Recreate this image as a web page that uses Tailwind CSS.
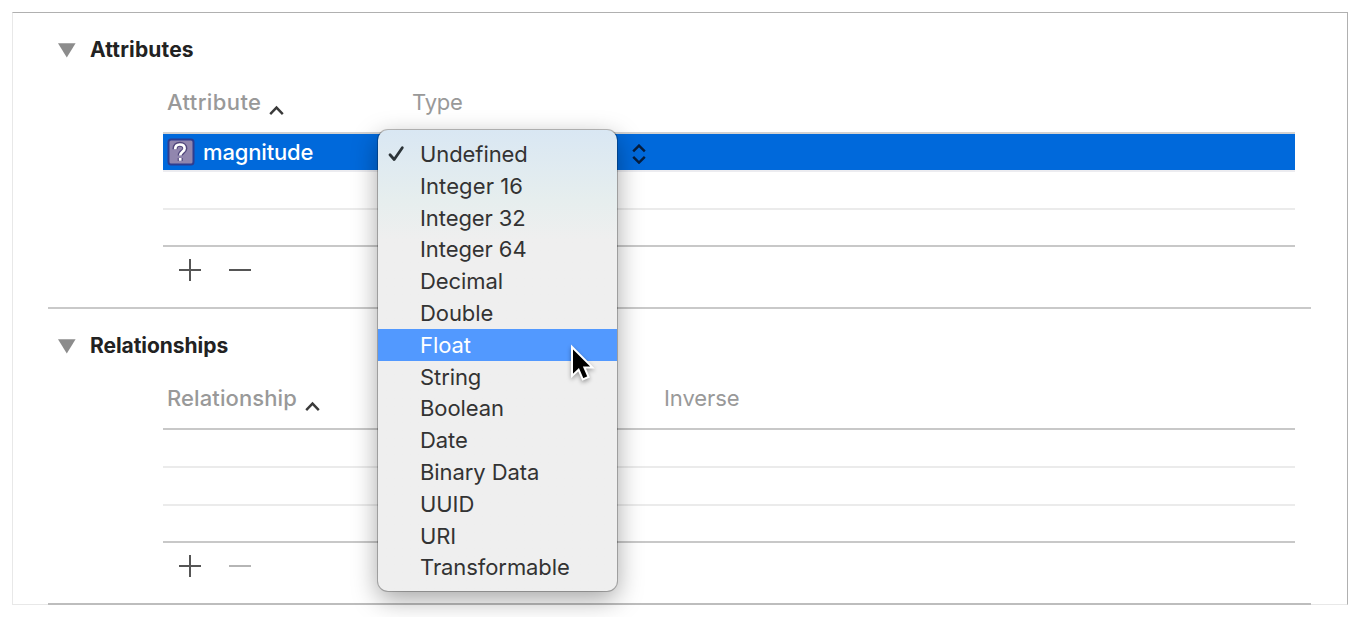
<!DOCTYPE html>
<html lang="en">
<head>
<meta charset="utf-8">
<title>Entity editor</title>
<script src="https://cdn.jsdelivr.net/npm/@tailwindcss/browser@4"></script>
</head>
<body class="relative h-[617px] w-[1360px] overflow-hidden bg-white font-['Inter','Liberation_Sans',sans-serif] text-[22px]">
  <main class="mx-3 pt-3">
    <div class="h-[593px] w-[1336px] border border-t-[#b0b0b0] border-r-[#b0b0b0] border-b-[#e8e8e8] border-l-[#e8e8e8] bg-white">
      <!-- Attributes -->
      <section class="mr-9 ml-[35px] flex h-[296px] flex-col border-b-2 border-[#c9c9c9]">
        <div class="flex h-[72px] items-center pt-[2px] pl-[10px]">
          <svg class="h-[15px] w-[18px]" viewBox="0 0 18 15"><path d="M0 0.3H17.6L8.8 14.6Z" fill="#8c8c8c"/></svg>
          <h2 class="ml-[14px] text-[21px] font-bold tracking-[0.15px] text-[#222]">Attributes</h2>
        </div>
        <div class="mr-4 ml-[115px] flex flex-col">
          <div class="flex h-[49px] border-b-2 border-[#d2d2d2] pl-1 leading-[34px] text-[#999]">
            <div class="flex w-[245px]"><span class="font-medium tracking-[0.4px]">Attribute</span>
              <svg class="mt-[20px] ml-[8px] h-[11px] w-[15px]" viewBox="0 0 15 11"><path d="M1.2 9.2L7.5 2.6L13.8 9.2" fill="none" stroke="#3a3a3a" stroke-width="2.4"/></svg>
            </div>
            <span class="tracking-[-0.2px]">Type</span>
          </div>
          <div class="flex h-[38px] items-center border-b-2 border-[#ececf0] bg-[#0069db] bg-clip-padding pl-1">
            <svg class="h-7 w-7" viewBox="0 0 28 28"><rect x="1.5" y="1.5" width="25" height="25" rx="2.5" fill="#9186ae" stroke="#2f3d8f" stroke-width="2"/><path d="M8.9 11.2C8.9 7.8 11 6.3 13.9 6.3C16.8 6.3 18.9 8 18.9 10.6C18.9 14 14.2 13.8 14.2 17.5M14.2 20V23" transform="translate(-1 0)" fill="none" stroke="#51477c" stroke-width="5"/><path d="M9.2 11.2C9.2 8 11 6.5 13.8 6.5C16.6 6.5 18.6 8 18.6 10.6C18.6 13.8 14.2 13.9 14.2 17.6M14.2 20V22.8" transform="translate(-1 0)" fill="none" stroke="#fff" stroke-width="2.7"/></svg>
            <span class="ml-2 w-[112px] font-medium tracking-[-0.15px] text-white">magnitude</span>
            <svg class="mt-[3px] ml-[317px] h-[20px] w-[14px]" viewBox="0 0 14 20"><path d="M1.2 7.4L7 1.6L12.8 7.4M1.2 12.8L7 18.6L12.8 12.8" fill="none" stroke="#061d3d" stroke-width="2.4"/></svg>
          </div>
          <div class="h-[38px] border-b-2 border-[#ebebeb]"></div>
          <div class="h-[37px] border-b-2 border-[#c8c8c8]"></div>
          <div class="flex gap-7 pt-3 pl-4">
            <svg class="h-[22px] w-[22px]" viewBox="0 0 22 22"><path d="M0 11H22M11 0V22" stroke="#555" stroke-width="2"/></svg>
            <svg class="h-[22px] w-[22px]" viewBox="0 0 22 22"><path d="M0 11H22" stroke="#555" stroke-width="2"/></svg>
          </div>
        </div>
      </section>
      <!-- Relationships -->
      <section class="mr-9 ml-[35px] flex h-[296px] flex-col border-b-2 border-[#bdbdbd]">
        <div class="flex h-[72px] items-center pt-[2px] pl-[10px]">
          <svg class="h-[15px] w-[18px]" viewBox="0 0 18 15"><path d="M0 0.3H17.6L8.8 14.6Z" fill="#8c8c8c"/></svg>
          <h2 class="ml-[14px] text-[21px] font-bold tracking-[-0.05px] text-[#222]">Relationships</h2>
        </div>
        <div class="mr-4 ml-[115px] flex flex-col">
          <div class="flex h-[49px] border-b-2 border-[#c8c8c8] pl-1 leading-[34px] text-[#999]">
            <div class="flex w-[497px]"><span class="font-medium tracking-[0.1px]">Relationship</span>
              <svg class="mt-[20px] ml-[8px] h-[11px] w-[15px]" viewBox="0 0 15 11"><path d="M1.2 9.2L7.5 2.6L13.8 9.2" fill="none" stroke="#3a3a3a" stroke-width="2.4"/></svg>
            </div>
            <span class="tracking-[-0.1px]">Inverse</span>
          </div>
          <div class="h-[38px] border-b-2 border-[#ebebeb]"></div>
          <div class="h-[38px] border-b-2 border-[#ebebeb]"></div>
          <div class="h-[37px] border-b-2 border-[#c8c8c8]"></div>
          <div class="flex gap-7 pt-3 pl-4">
            <svg class="h-[22px] w-[22px]" viewBox="0 0 22 22"><path d="M0 11H22M11 0V22" stroke="#555" stroke-width="2"/></svg>
            <svg class="h-[22px] w-[22px]" viewBox="0 0 22 22"><path d="M0 11H22" stroke="#b5b5b5" stroke-width="2"/></svg>
          </div>
        </div>
      </section>
    </div>
  </main>

  <!-- Type popup menu -->
  <ul class="absolute top-[130px] left-[378px] flex h-[461px] w-[239px] flex-col rounded-[10px] bg-[#efefef] bg-linear-to-b from-[#d9e7f3] via-[#e6eeee] via-[15%] to-[#efefef] to-[24%] pt-2 leading-[33.8px] tracking-[-0.08px] text-[#333] shadow-[0_0_0_1px_rgba(0,0,0,0.25),0_8px_26px_rgba(0,0,0,0.36)]">
    <li class="flex h-[31.8px] items-center pl-[10px]"><svg class="mr-[15px] h-[17px] w-[17px]" viewBox="0 0 17 17"><path d="M2 9.8L6.2 14.5L14.3 2.7" fill="none" stroke="#2c3438" stroke-width="2.8" stroke-linecap="round" stroke-linejoin="round"/></svg><span class="pt-[2px] leading-[31.8px]">Undefined</span></li>
    <li class="h-[31.8px] pl-[42px] tracking-[0.1px]">Integer 16</li>
    <li class="h-[31.8px] pl-[42px]">Integer 32</li>
    <li class="h-[31.8px] pl-[42px]">Integer 64</li>
    <li class="h-[31.8px] pl-[42px]">Decimal</li>
    <li class="h-[31.8px] pl-[42px]">Double</li>
    <li class="h-[31.8px] bg-[#5299ff] pl-[42px] text-white">Float</li>
    <li class="h-[31.8px] pl-[42px]">String</li>
    <li class="h-[31.8px] pl-[42px]">Boolean</li>
    <li class="h-[31.8px] pl-[42px]">Date</li>
    <li class="h-[31.8px] pl-[42px]">Binary Data</li>
    <li class="h-[31.8px] pl-[42px]">UUID</li>
    <li class="h-[31.8px] pl-[42px]">URI</li>
    <li class="h-[31.8px] pl-[42px]">Transformable</li>
  </ul>

  <!-- Mouse pointer -->
  <svg class="absolute top-[343px] left-[568px] h-[42px] w-[30px] drop-shadow-[0_2px_2px_rgba(0,0,0,0.35)]" viewBox="0 0 30 42"><path d="M4 4V33L10.6 26.7L14.8 36.4L20.6 34L16.4 24.4H24.4Z" fill="#000" stroke="#fff" stroke-width="2"/></svg>
</body>
</html>
